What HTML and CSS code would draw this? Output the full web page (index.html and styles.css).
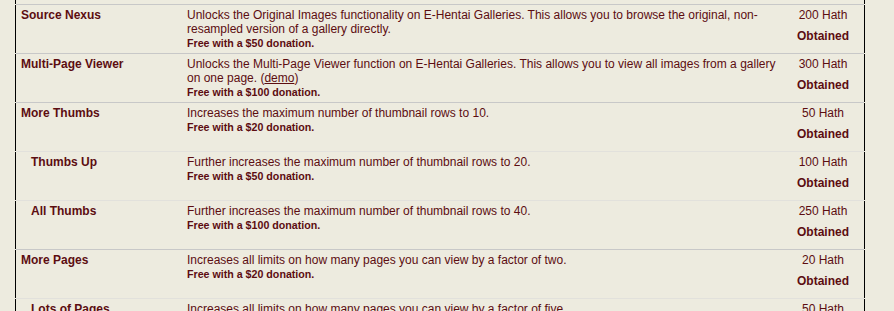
FILE: index.html
```html
<!DOCTYPE html>
<html>
<head>
<meta charset="utf-8">
<link rel="stylesheet" href="styles.css">
</head>
<body>
<div class="perks">
  <div class="row stub"></div>
  <div class="sep dark"></div>
  <div class="row">
    <div class="name">Source Nexus</div>
    <div class="desc">Unlocks the Original Images functionality on E-Hentai Galleries. This allows you to browse the original, non-resampled version of a gallery directly.<div class="free">Free with a $50 donation.</div></div>
    <div class="cost"><div>200 Hath</div><div class="got">Obtained</div></div>
  </div>
  <div class="sep dark"></div>
  <div class="row">
    <div class="name">Multi-Page Viewer</div>
    <div class="desc">Unlocks the Multi-Page Viewer function on E-Hentai Galleries. This allows you to view all images from a gallery on one page. (<a href="#">demo</a>)<div class="free">Free with a $100 donation.</div></div>
    <div class="cost"><div>300 Hath</div><div class="got">Obtained</div></div>
  </div>
  <div class="sep dark"></div>
  <div class="row">
    <div class="name">More Thumbs</div>
    <div class="desc">Increases the maximum number of thumbnail rows to 10.<div class="free">Free with a $20 donation.</div></div>
    <div class="cost"><div>50 Hath</div><div class="got">Obtained</div></div>
  </div>
  <div class="sep light"></div>
  <div class="row">
    <div class="name sub">Thumbs Up</div>
    <div class="desc">Further increases the maximum number of thumbnail rows to 20.<div class="free">Free with a $50 donation.</div></div>
    <div class="cost"><div>100 Hath</div><div class="got">Obtained</div></div>
  </div>
  <div class="sep light"></div>
  <div class="row">
    <div class="name sub">All Thumbs</div>
    <div class="desc">Further increases the maximum number of thumbnail rows to 40.<div class="free">Free with a $100 donation.</div></div>
    <div class="cost"><div>250 Hath</div><div class="got">Obtained</div></div>
  </div>
  <div class="sep dark"></div>
  <div class="row">
    <div class="name">More Pages</div>
    <div class="desc">Increases all limits on how many pages you can view by a factor of two.<div class="free">Free with a $20 donation.</div></div>
    <div class="cost"><div>20 Hath</div><div class="got">Obtained</div></div>
  </div>
  <div class="sep light"></div>
  <div class="row">
    <div class="name sub">Lots of Pages</div>
    <div class="desc">Increases all limits on how many pages you can view by a factor of five.<div class="free">Free with a $50 donation.</div></div>
    <div class="cost"><div>50 Hath</div><div class="got">Obtained</div></div>
  </div>
</div>
</body>
</html>
```
FILE: styles.css
```css
html, body {
  margin: 0;
  padding: 0;
  background: #EDEBDF;
}
body {
  font-family: "Liberation Sans", Arial, sans-serif;
  font-size: 12px;
  color: #5C0D11;
  overflow: hidden;
}
.perks {
  margin-left: 15px;
  width: 850px;
}
.row {
  border-left: 1px solid #000;
  border-right: 1px solid #000;
  height: 48px;
  display: grid;
  grid-template-columns: 166px 600px 82px;
  line-height: 14px;
  box-sizing: border-box;
  padding-top: 3px;
}
.row.stub {
  height: 4px;
  padding: 0;
}
.sep {
  height: 1px;
  margin: 0 1px;
}
.sep.dark { background: #C8C8C8; }
.sep.light { background: #E2E1DC; }
.name {
  font-weight: bold;
  padding-left: 5px;
}
.name.sub {
  padding-left: 15px;
}
.desc {
  padding: 0 5px;
}
.desc a {
  color: #5C0D11;
  text-decoration: underline;
}
.free {
  font-weight: bold;
  font-size: 8pt;
  line-height: 14px;
}
.cost {
  text-align: center;
}
.got {
  font-weight: bold;
  margin-top: 7px;
}
```
